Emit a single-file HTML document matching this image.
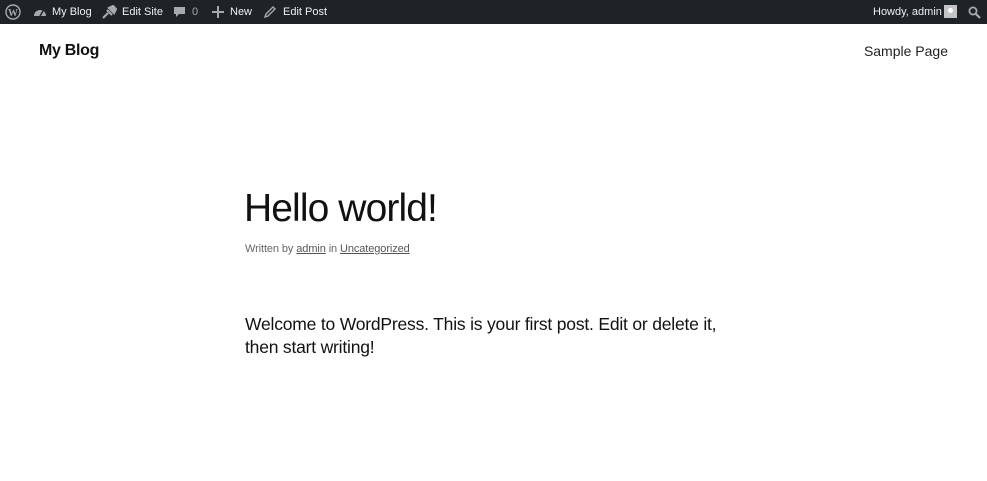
<!DOCTYPE html>
<html><head><meta charset="utf-8"><style>
body{margin:0;width:987px;height:481px;background:#fff;font-family:"Liberation Sans",sans-serif;overflow:hidden;position:relative}
.bar{position:absolute;left:0;top:0;width:987px;height:24px;background:#1d2327;color:#f0f0f1;font-size:11px}
.bar span{position:absolute;top:6px;line-height:13px}
.bar svg{position:absolute}
.t{position:absolute;color:#111;white-space:nowrap}
a{color:#555;text-decoration:underline}
</style></head><body>
<div class="bar">
<svg style="left:5px;top:4px" width="16" height="16" viewBox="0 0 16 16"><circle cx="8" cy="8" r="7" fill="none" stroke="#a7aaad" stroke-width="1.4"/><text x="8" y="12" font-size="10" font-family="Liberation Serif" font-weight="bold" fill="#a7aaad" text-anchor="middle">W</text></svg>
<svg style="left:33px;top:6px" width="14" height="12" viewBox="0 0 14 12"><path d="M1 10A6 6 0 0 1 13 10Z" fill="#a7aaad"/><path d="M7 10L10 5" stroke="#1d2327" stroke-width="1.5"/></svg>
<span style="left:52px">My Blog</span>
<svg style="left:102px;top:5px" width="15" height="14" viewBox="0 0 15 14"><path d="M1 13L6 8M5 5L10 10M7 3L12 8L14 4L11 1Z" stroke="#a7aaad" stroke-width="2.2" fill="#a7aaad"/></svg>
<span style="left:122px">Edit Site</span>
<svg style="left:173px;top:6px" width="13" height="13" viewBox="0 0 13 13"><path d="M1 1H12V8H6L3 11V8H1Z" fill="#a7aaad"/></svg>
<span style="left:192px;color:#a7aaad">0</span>
<svg style="left:212px;top:6px" width="12" height="12" viewBox="0 0 12 12"><path d="M6 0V12M0 6H12" stroke="#a7aaad" stroke-width="2"/></svg>
<span style="left:230px">New</span>
<svg style="left:264px;top:6px" width="12" height="12" viewBox="0 0 12 12"><path d="M1 11L2 8L9 1L11 3L4 10Z" fill="none" stroke="#a7aaad" stroke-width="1.4"/></svg>
<span style="left:283px">Edit Post</span>
<span style="left:873px">Howdy, admin</span>
<div style="position:absolute;left:944px;top:5px;width:13px;height:13px;background:#c3c4c7"><div style="margin:3px auto 0;width:5px;height:5px;border-radius:50%;background:#fff"></div></div>
<svg style="left:968px;top:6px" width="13" height="13" viewBox="0 0 13 13"><circle cx="5" cy="5" r="3.6" fill="none" stroke="#a7aaad" stroke-width="1.8"/><path d="M7.5 7.5L12 12" stroke="#a7aaad" stroke-width="2.2"/></svg>
</div>
<div class="t" style="left:39px;top:42px;font-size:16px;font-weight:bold;letter-spacing:-0.3px">My Blog</div>
<div class="t" style="right:39px;top:43px;font-size:14px;color:#222">Sample Page</div>
<div class="t" style="left:244px;top:187px;font-size:39px;letter-spacing:-0.9px">Hello world!</div>
<div class="t" style="left:245px;top:243px;font-size:11px;color:#666;letter-spacing:-0.1px">Written by <a>admin</a> in <a>Uncategorized</a></div>
<div class="t" style="left:245px;top:313px;font-size:17.5px;line-height:23px;letter-spacing:-0.2px;color:#111">Welcome to WordPress. This is your first post. Edit or delete it,<br>then start writing!</div>
</body></html>
